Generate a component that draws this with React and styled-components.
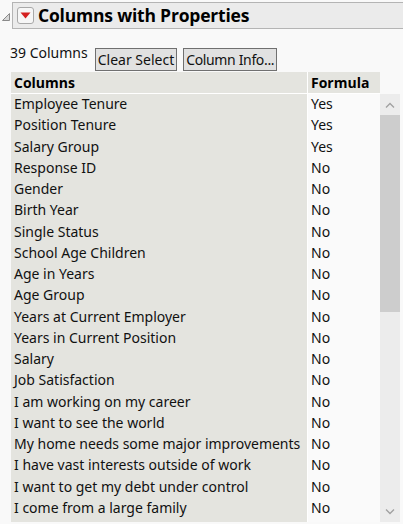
import React from "react";
import styled, { createGlobalStyle } from "styled-components";

const Global = createGlobalStyle`
  html, body { margin: 0; padding: 0; background: #f9f9f9; }
  body { font-family: "Segoe UI", "Noto Sans", "Open Sans", sans-serif; color: #111; overflow: hidden; }
`;

const Page = styled.div`
  width: 403px;
  height: 524px;
  overflow: hidden;
  display: flex;
  flex-direction: column;
`;

const Outline = styled.div`
  display: flex;
  align-items: center;
  padding-top: 2px;
  height: 27px;
`;

const Disclosure = styled.svg`
  width: 12px;
  height: 27px;
  flex: none;
`;

const HeaderBar = styled.div`
  flex: 1;
  height: 25px;
  background: #ebebeb;
  border: 1px solid #b4b4b4;
  border-right: none;
  display: flex;
  align-items: center;
  padding-left: 4px;
  gap: 4px;
`;

const RedButton = styled.div`
  width: 17px;
  height: 17px;
  box-sizing: border-box;
  border: 1px solid #a8a8a8;
  border-radius: 3px;
  background: #f6f6f6;
  display: flex;
  align-items: center;
  justify-content: center;
`;

const Title = styled.div`
  font-family: "Open Sans", "Noto Sans", sans-serif;
  font-weight: 700;
  font-size: 17.5px;
  letter-spacing: -0.2px;
  color: #000;
  line-height: 1;
`;

const Toolbar = styled.div`
  display: flex;
  align-items: flex-start;
  padding: 13px 0 0 10px;
  height: 30px;
`;

const Count = styled.span`
  font-size: 14px;
  line-height: 16px;
  margin-top: 3px;
  margin-right: 7px;
  font-family: "Noto Sans", sans-serif;
`;

const Button = styled.button`
  margin-top: 6px;
  margin-right: 6px;
  height: 23px;
  padding: 0 2px;
  border: 1px solid #707070;
  background: #e1e1e1;
  font-family: "Noto Sans", sans-serif;
  font-size: 14px;
  letter-spacing: ${(p) => (p.$tight ? "-0.35px" : "0")};
  color: #111;
  line-height: 1;
  border-radius: 0;
`;

const Table = styled.div`
  margin-left: 11px;
  display: grid;
  grid-template-columns: 296px 73px 20px;
  grid-template-rows: 22px 1fr;
  height: 450px;
`;

const HeadCell = styled.div`
  background: #e4e4df;
  border-bottom: 1px solid #ffffff;
  border-left: ${(p) => (p.$divider ? "1px solid #ffffff" : "none")};
  font-weight: 700;
  font-size: 14px;
  font-family: "Open Sans", "Noto Sans", sans-serif;
  display: flex;
  align-items: center;
  padding-left: 3px;
  padding-bottom: 1px;
  color: #000;
`;

const Spacer = styled.div``;

const Column = styled.div`
  background: ${(p) => (p.$shaded ? "#e4e4df" : "#fafafa")};
  border-left: ${(p) => (p.$divider ? "1px solid #ffffff" : "none")};
  display: flex;
  flex-direction: column;
`;

const Cell = styled.div`
  height: 21.25px;
  line-height: 20.5px;
  font-family: "Noto Sans", sans-serif;
  font-size: 14px;
  padding-left: 3px;
  white-space: nowrap;
  overflow: hidden;
  color: #111;
`;

const Scrollbar = styled.div`
  background: #ececec;
  display: flex;
  flex-direction: column;
`;

const Arrow = styled.div`
  height: 21px;
  background: #ececec;
  display: flex;
  align-items: center;
  justify-content: center;
`;

const Thumb = styled.div`
  height: 197px;
  background: #cdcdcd;
`;

const Track = styled.div`
  flex: 1;
`;

const rows = [
  ["Employee Tenure", "Yes"],
  ["Position Tenure", "Yes"],
  ["Salary Group", "Yes"],
  ["Response ID", "No"],
  ["Gender", "No"],
  ["Birth Year", "No"],
  ["Single Status", "No"],
  ["School Age Children", "No"],
  ["Age in Years", "No"],
  ["Age Group", "No"],
  ["Years at Current Employer", "No"],
  ["Years in Current Position", "No"],
  ["Salary", "No"],
  ["Job Satisfaction", "No"],
  ["I am working on my career", "No"],
  ["I want to see the world", "No"],
  ["My home needs some major improvements", "No"],
  ["I have vast interests outside of work", "No"],
  ["I want to get my debt under control", "No"],
  ["I come from a large family", "No"],
];

export default function App() {
  return (
    <Page>
      <Global />
      <Outline>
        <Disclosure viewBox="0 0 12 27">
          <path d="M2.5 18.5 L9.5 11.5 L9.5 18.5 Z" fill="#d8d8d8" stroke="#8a8a8a" strokeWidth="1" />
        </Disclosure>
        <HeaderBar>
          <RedButton>
            <svg width="11" height="7" viewBox="0 0 11 7">
              <path d="M0.5 0.5 L10.5 0.5 L5.5 6.5 Z" fill="#d42020" />
            </svg>
          </RedButton>
          <Title>Columns with Properties</Title>
        </HeaderBar>
      </Outline>
      <Toolbar>
        <Count>39 Columns</Count>
        <Button>Clear Select</Button>
        <Button $tight>Column Info...</Button>
      </Toolbar>
      <Table>
        <HeadCell>Columns</HeadCell>
        <HeadCell $divider>Formula</HeadCell>
        <Spacer />
        <Column $shaded>
          {rows.map(([n]) => (
            <Cell key={n}>{n}</Cell>
          ))}
        </Column>
        <Column $divider>
          {rows.map(([n, f]) => (
            <Cell key={n}>{f}</Cell>
          ))}
        </Column>
        <Scrollbar>
          <Arrow>
            <svg width="10" height="6" viewBox="0 0 10 6">
              <path d="M1 5.5 L5 1.5 L9 5.5" fill="none" stroke="#a0a0a0" strokeWidth="1.3" />
            </svg>
          </Arrow>
          <Thumb />
          <Track />
          <Arrow>
            <svg width="10" height="6" viewBox="0 0 10 6">
              <path d="M1 0.5 L5 4.5 L9 0.5" fill="none" stroke="#a0a0a0" strokeWidth="1.3" />
            </svg>
          </Arrow>
        </Scrollbar>
      </Table>
    </Page>
  );
}
